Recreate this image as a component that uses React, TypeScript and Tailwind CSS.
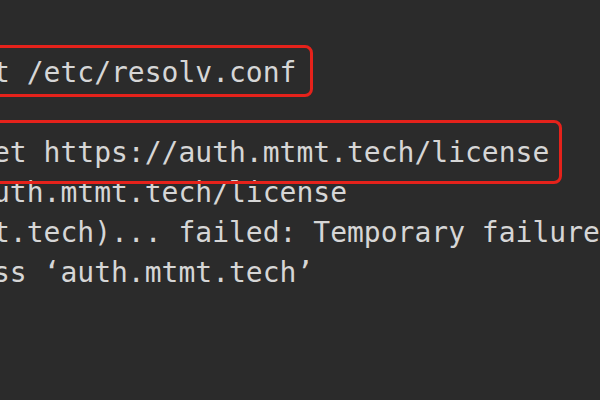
import React from "react";

export default function App() {
  const lines = [
    "t /etc/resolv.conf",
    " ",
    "et https://auth.mtmt.tech/license",
    "uth.mtmt.tech/license",
    "t.tech)... failed: Temporary failure in name resolution.",
    "ss \u2018auth.mtmt.tech\u2019",
  ];
  return (
    <div className="relative w-[600px] h-[400px] overflow-hidden bg-[#2b2b2b]">
      <div
        className="ml-[-7px] pt-[53px] text-[28px] leading-[40px] text-[#d6d6d6] whitespace-pre"
        style={{ fontFamily: '"DejaVu Sans Mono", "Liberation Mono", monospace' }}
      >
        {lines.map((l, i) => (
          <div key={i} className="h-[40px]">
            {l}
          </div>
        ))}
      </div>
      <div className="absolute left-[-20px] top-[45px] w-[333px] h-[52px] rounded-[8px] border-[3px] border-[#e5221b]" />
      <div className="absolute left-[-20px] top-[120px] w-[582px] h-[64px] rounded-[8px] border-[3px] border-[#e5221b]" />
    </div>
  );
}
